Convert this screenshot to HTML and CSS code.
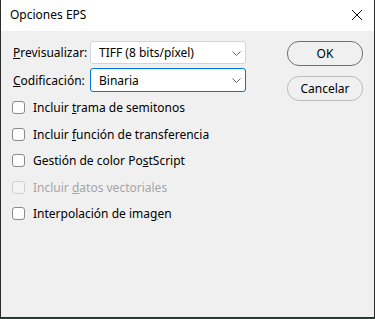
FILE: index.html
```html
<!DOCTYPE html>
<html lang="es">
<head>
  <meta charset="UTF-8">
  <title>Opciones EPS</title>
  <link rel="stylesheet" href="styles.css">
</head>
<body>

  <div class="window">
    <div class="title-bar">
      <span class="title">Opciones EPS</span>
      <svg class="close" width="12" height="12" viewBox="0 0 12 12">
        <path d="M1 1 L11 11 M11 1 L1 11" stroke="#111" stroke-width="1" fill="none"/>
      </svg>
    </div>

    <div class="dialog">
      <div class="options">
        <div class="field">
          <label class="field-label"><u>P</u>revisualizar:</label>
          <div class="select">
            <span>TIFF (8 bits/píxel)</span>
            <svg class="chevron" width="9" height="5" viewBox="0 0 9 5"><polyline points="0.5,0.5 4.5,4.5 8.5,0.5" stroke="#666" fill="none"/></svg>
          </div>
        </div>
        <div class="field">
          <label class="field-label"><u>C</u>odificación:</label>
          <div class="select focused">
            <span>Binaria</span>
            <svg class="chevron" width="9" height="5" viewBox="0 0 9 5"><polyline points="0.5,0.5 4.5,4.5 8.5,0.5" stroke="#666" fill="none"/></svg>
          </div>
        </div>

        <div class="checks">
          <div class="check"><span class="box"></span><span>Incluir <u>t</u>rama de semitonos</span></div>
          <div class="check"><span class="box"></span><span>Incluir <u>f</u>unción de transferencia</span></div>
          <div class="check"><span class="box"></span><span>Gestión de color Po<u>s</u>tScript</span></div>
          <div class="check disabled"><span class="box"></span><span>Incluir <u>d</u>atos vectoriales</span></div>
          <div class="check"><span class="box"></span><span>Interpolación de ima<u>g</u>en</span></div>
        </div>
      </div>

      <div class="buttons">
        <button class="btn default">OK</button>
        <button class="btn">Cancelar</button>
      </div>
    </div>
  </div>

</body>
</html>
```

FILE: styles.css
```css
html {
  background: #34403f;
}

body {
  margin: 0;
  font-family: 'Noto Sans', 'Open Sans', sans-serif;
  font-size: 12px;
  color: #000;
}

/* Window frame */
.window {
  width: 373px;
  height: 317px;
  background: #f0f0f0;
  border: 1px solid #2b2b2b;
  border-top: none;
}

.title-bar {
  height: 31px;
  background: #fff;
  display: flex;
  align-items: center;
  justify-content: space-between;
  padding: 0 11px 0 9px;
}

.title {
  font-size: 12px;
  padding-bottom: 2px;
}

.close {
  margin-top: -1px;
}

/* Dialog content */
.dialog {
  display: flex;
  justify-content: space-between;
  padding: 10px 11px 0 12px;
}

.field {
  display: flex;
  align-items: center;
  margin-bottom: 4px;
}

.field-label {
  width: 77px;
}

.select {
  width: 142px;
  height: 21px;
  background: #fff;
  border: 1px solid #d4d4d4;
  border-radius: 3px;
  display: flex;
  align-items: center;
  justify-content: space-between;
  padding: 0 4px 0 8px;
}

.select.focused {
  height: 22px;
  border-color: #0078d7;
}

.chevron {
  margin-top: 1px;
}

.checks {
  margin-top: -1.5px;
}

.check {
  display: flex;
  align-items: center;
  height: 26.5px;
  margin-left: -1px;
}

.box {
  width: 11px;
  height: 11px;
  border: 1px solid #8a8a8a;
  border-radius: 3px;
  background: #fff;
  margin-right: 8px;
}

.check.disabled {
  color: #a6a6a6;
}

.check.disabled .box {
  border-color: #d0d0d0;
  background: #f4f4f4;
}

/* Buttons */
.buttons {
  display: flex;
  flex-direction: column;
  gap: 10px;
}

.btn {
  width: 76px;
  height: 25px;
  font-family: inherit;
  font-size: 12px;
  color: #000;
  background: #f0f0f0;
  border: 1px solid #bcbcbc;
  border-radius: 12px;
  padding: 0;
}

.btn.default {
  border-color: #707070;
}
```
